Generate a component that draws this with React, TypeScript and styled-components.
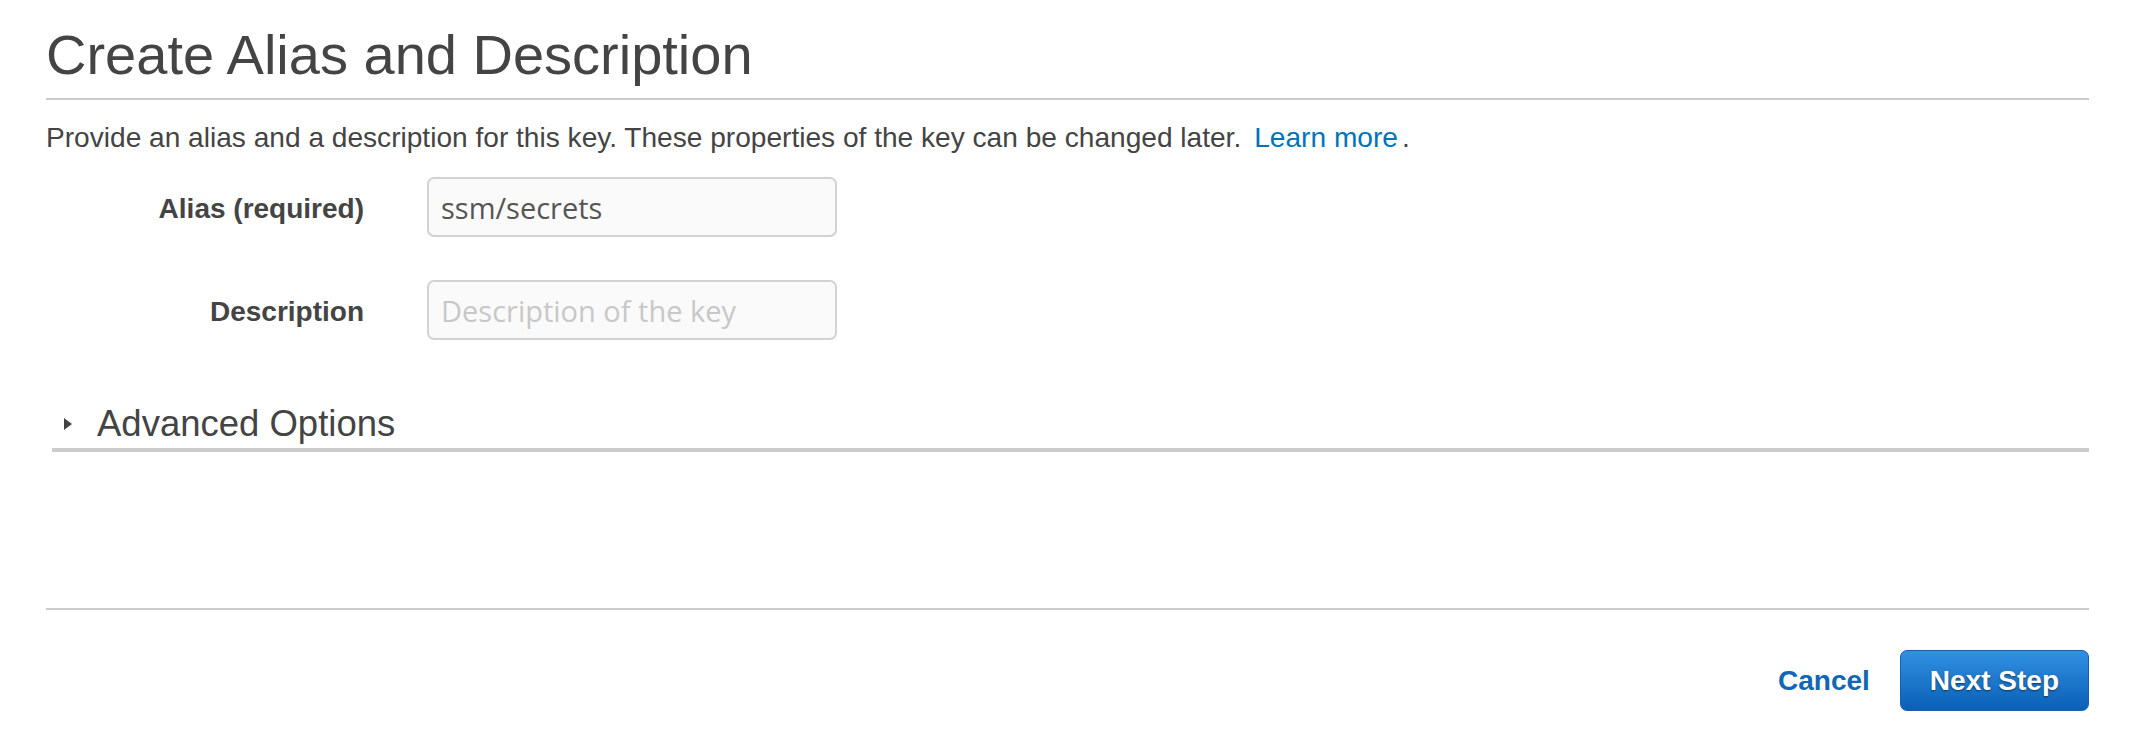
import React from "react";
import styled, { createGlobalStyle } from "styled-components";

const GlobalStyle = createGlobalStyle`
  html, body {
    margin: 0;
    padding: 0;
    background: #ffffff;
  }
  body {
    font-family: "Liberation Sans", Arial, sans-serif;
    color: #444444;
  }
  * { box-sizing: border-box; }
`;

const Page = styled.div`
  padding: 0 43px 0 46px;
`;

const Title = styled.h1`
  margin: 0;
  padding: 23px 0 11px;
  font-size: 56px;
  line-height: 64px;
  font-weight: 400;
  color: #444444;
  border-bottom: 2px solid #cccccc;
`;

const Intro = styled.p`
  margin: 20px 0 0;
  font-size: 28.1px;
  line-height: 36px;
  color: #444444;
`;

const Link = styled.a`
  color: #0073bb;
  text-decoration: none;
  margin-left: 13px;
  margin-right: 4px;
`;

const Form = styled.div`
  display: grid;
  grid-template-columns: 318px 410px;
  column-gap: 63px;
  row-gap: 41px;
  margin-top: 21px;
`;

const Label = styled.label`
  font-size: 28px;
  font-weight: 700;
  line-height: 60px;
  padding-top: 2px;
  text-align: right;
  color: #444444;
`;

const Input = styled.input`
  width: 410px;
  height: 60px;
  margin: 0;
  padding: 0 12px;
  border: 2px solid #d2d2d2;
  border-radius: 7px;
  background: #fafafa;
  font-family: "Open Sans", "DejaVu Sans", sans-serif;
  font-size: 29px;
  color: #555555;
  outline: none;
  &::placeholder {
    color: #c8c8c8;
  }
`;

const Advanced = styled.div`
  margin: 62px 0 0 6px;
  display: flex;
  align-items: center;
  gap: 23px;
  padding: 0 0 4px 10px;
  border-bottom: 4px solid #cccccc;
`;

const Caret = styled.svg`
  width: 12px;
  height: 18px;
  flex: none;
`;

const AdvancedTitle = styled.span`
  font-size: 36.5px;
  line-height: 40px;
  color: #444444;
`;

const Spacer = styled.div`
  height: 158px;
  border-bottom: 2px solid #cccccc;
`;

const Footer = styled.div`
  display: flex;
  justify-content: flex-end;
  align-items: center;
  gap: 30px;
  padding-top: 40px;
`;

const CancelLink = styled.a`
  font-size: 28px;
  font-weight: 700;
  color: #1166b5;
  text-decoration: none;
`;

const PrimaryButton = styled.button`
  height: 61px;
  padding: 0 29px;
  border: 1px solid #1560ae;
  border-radius: 7px;
  background: linear-gradient(#3190e2, #0a60b6);
  color: #ffffff;
  font-family: "Liberation Sans", Arial, sans-serif;
  font-size: 28px;
  font-weight: 700;
  text-shadow: 0 1px 2px rgba(0, 0, 0, 0.55);
  cursor: pointer;
`;

export default function App() {
  return (
    <>
      <GlobalStyle />
      <Page>
        <Title>Create Alias and Description</Title>
        <Intro>
          Provide an alias and a description for this key. These properties of the key can be changed later.
          <Link href="#">Learn more</Link>.
        </Intro>
        <Form>
          <Label htmlFor="alias">Alias (required)</Label>
          <Input id="alias" defaultValue="ssm/secrets" />
          <Label htmlFor="desc">Description</Label>
          <Input id="desc" placeholder="Description of the key" />
        </Form>
        <Advanced>
          <Caret viewBox="0 0 12 18">
            <path d="M2 3 L10 9 L2 15 Z" fill="#444444" />
          </Caret>
          <AdvancedTitle>Advanced Options</AdvancedTitle>
        </Advanced>
        <Spacer />
        <Footer>
          <CancelLink href="#">Cancel</CancelLink>
          <PrimaryButton>Next Step</PrimaryButton>
        </Footer>
      </Page>
    </>
  );
}
